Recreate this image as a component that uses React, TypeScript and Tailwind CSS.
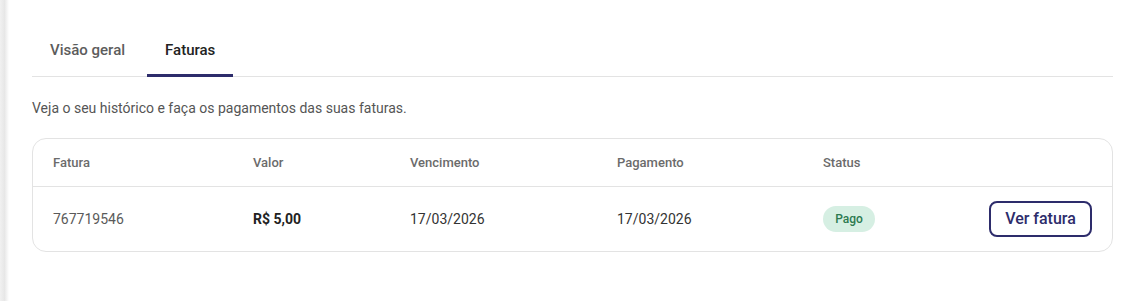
import React from "react";

const invoices = [
  {
    id: "767719546",
    valor: "R$ 5,00",
    vencimento: "17/03/2026",
    pagamento: "17/03/2026",
    status: "Pago",
  },
];

const cols = "grid grid-cols-[200px_157px_207px_206px_1fr] items-center px-5";

export default function App() {
  return (
    <div className="flex min-h-[301px] bg-white font-['Roboto',sans-serif]">
      {/* sidebar shadow */}
      <div className="w-[9px] shrink-0 bg-gradient-to-r from-[#f1f1f1] via-[#e7e7e7] to-white" />

      <div className="flex-1 pl-[23px] pr-8 pt-[26px]">
        {/* Tabs */}
        <div className="flex gap-1 border-b border-[#e3e3e3]">
          <button className="h-[51px] -mb-px px-[18px] pt-px border-b-[3px] border-transparent text-[15px] font-medium text-[#5c5c5c]">
            Visão geral
          </button>
          <button className="h-[51px] -mb-px px-[18px] pt-px border-b-[3px] border-[#2d2c6b] text-[15px] font-medium text-[#222]">
            Faturas
          </button>
        </div>

        <p className="mt-[21px] text-[14px] leading-5 text-[#555]">
          Veja o seu histórico e faça os pagamentos das suas faturas.
        </p>

        {/* Table card */}
        <div className="mt-5 rounded-[14px] border border-[#e3e3e3]">
          <div className={`${cols} h-12 border-b border-[#e3e3e3] text-[13px] font-medium text-[#6b6b6b]`}>
            <span>Fatura</span>
            <span>Valor</span>
            <span>Vencimento</span>
            <span>Pagamento</span>
            <span>Status</span>
          </div>
          {invoices.map((inv) => (
            <div key={inv.id} className={`${cols} h-16 text-[14px]`}>
              <span className="text-[#5a5a5a]">{inv.id}</span>
              <span className="font-bold text-[#222]">{inv.valor}</span>
              <span className="text-[#333]">{inv.vencimento}</span>
              <span className="text-[#333]">{inv.pagamento}</span>
              <div className="flex items-center justify-between">
                <span className="inline-flex h-[26px] w-[52px] items-center justify-center rounded-full bg-[#d6efe3] text-[12px] font-medium text-[#2c7a50]">
                  {inv.status}
                </span>
                <button className="h-9 w-[103px] rounded-lg border-2 border-[#2d2c6b] text-[16px] font-medium text-[#2d2c6b]">
                  Ver fatura
                </button>
              </div>
            </div>
          ))}
        </div>
      </div>
    </div>
  );
}
